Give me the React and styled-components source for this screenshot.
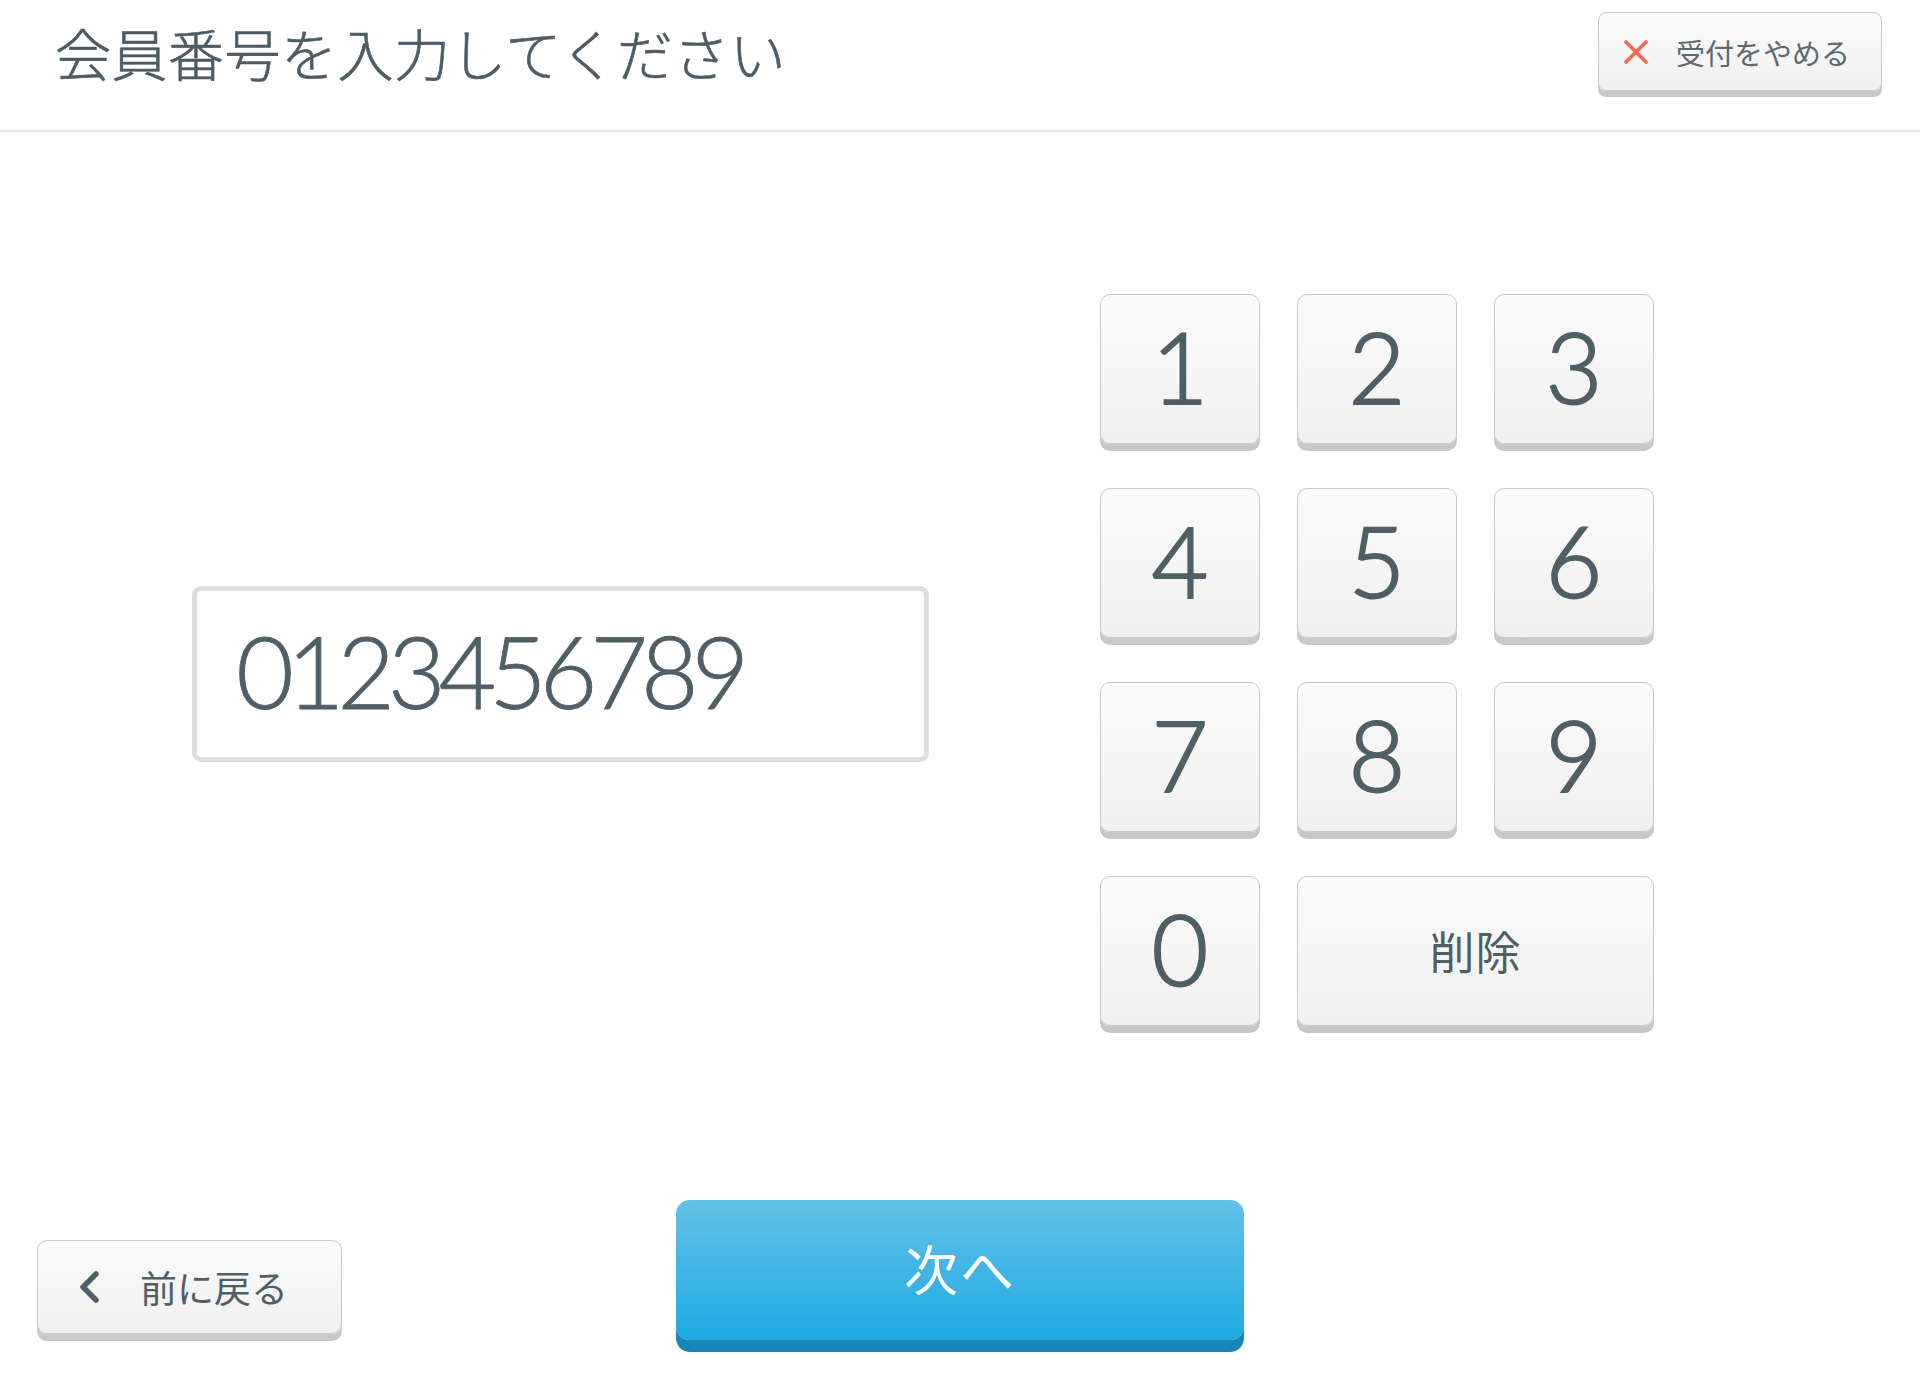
import React, { useState } from 'react';
import styled, { createGlobalStyle } from 'styled-components';

const GlobalStyle = createGlobalStyle`
  html, body {
    margin: 0;
    padding: 0;
    background: #ffffff;
  }
  body {
    font-family: "Noto Sans CJK JP", "Noto Sans", sans-serif;
    color: #4f5f66;
  }
`;

const Page = styled.div`
  width: 1920px;
  height: 1400px;
  display: flex;
  flex-direction: column;
  background: #ffffff;
`;

const Header = styled.header`
  height: 132px;
  border-bottom: 2px solid #e6e6e6;
  display: flex;
  justify-content: space-between;
  align-items: flex-start;
  padding: 12px 38px 0 55px;
  box-sizing: border-box;
`;

const Title = styled.h1`
  margin: 0;
  font-size: 56px;
  line-height: 80px;
  font-weight: 300;
  letter-spacing: 0.5px;
  color: #4d5c63;
  -webkit-text-stroke: 0.6px #4d5c63;
`;

const SoftButton = styled.button`
  display: flex;
  align-items: center;
  box-sizing: border-box;
  border: 1.5px solid #c9c9c9;
  border-radius: 10px;
  background: linear-gradient(#fbfbfb, #f0f0f0);
  box-shadow: 0 7px 0 #c8c8c8;
  color: #505f66;
  font-family: "Noto Sans CJK JP", sans-serif;
  cursor: pointer;
  padding: 0;
`;

const CancelButton = styled(SoftButton)`
  width: 284px;
  height: 79px;
  padding-left: 24px;
  gap: 27px;
  font-size: 29px;
  box-shadow: 0 6px 0 #c8c8c8;
  border-radius: 8px;
  color: #5b6a70;
`;

const Main = styled.main`
  height: 1068px;
  display: flex;
  align-items: flex-start;
  padding: 162px 0 0 192px;
  box-sizing: border-box;
  gap: 171px;
`;

const InputBox = styled.div`
  margin-top: 292px;
  width: 737px;
  height: 176px;
  box-sizing: border-box;
  border: 5px solid #dedede;
  border-radius: 9px;
  display: flex;
  align-items: center;
  padding: 0 0 8px 39px;
  font-family: Lato, "Open Sans", sans-serif;
  font-weight: 300;
  font-size: 100px;
  letter-spacing: -7.4px;
  color: #4f5f66;
  -webkit-text-stroke: 0.8px #4f5f66;
`;

const Keypad = styled.div`
  display: grid;
  grid-template-columns: repeat(3, 160px);
  grid-auto-rows: 150px;
  column-gap: 37px;
  row-gap: 44px;
`;

const Key = styled(SoftButton)`
  justify-content: center;
  grid-column: ${p => (p.$wide ? 'span 2' : 'auto')};
  font-family: ${p => (p.$wide ? '"Noto Sans CJK JP", sans-serif' : 'Lato, "Open Sans", sans-serif')};
  font-size: ${p => (p.$wide ? '45px' : '98px')};
  font-weight: ${p => (p.$wide ? 400 : 300)};
  letter-spacing: ${p => (p.$wide ? '1px' : '0')};
  padding-bottom: ${p => (p.$wide ? '2px' : '6px')};
  -webkit-text-stroke: ${p => (p.$wide ? '0' : '2px')} #4f5f66;
`;

const Footer = styled.footer`
  display: grid;
  grid-template-columns: 1fr 568px 1fr;
  align-items: end;
  padding: 0 37px;
`;

const BackButton = styled(SoftButton)`
  justify-self: start;
  width: 305px;
  height: 94px;
  padding-left: 40px;
  gap: 40px;
  font-size: 37px;
  margin-bottom: 18px;
`;

const NextButton = styled.button`
  height: 140px;
  border: none;
  border-radius: 14px;
  background: linear-gradient(#64c1e7, #1eaae3);
  box-shadow: 0 12px 0 #1a86b8;
  color: #ffffff;
  font-family: "Noto Sans CJK JP", sans-serif;
  font-size: 54px;
  font-weight: 400;
  letter-spacing: 2px;
  cursor: pointer;
  margin-bottom: 12px;
  padding-bottom: 6px;
`;

const CrossIcon = () => (
  <svg width="26" height="26" viewBox="0 0 26 26">
    <path d="M3 3 L23 23 M23 3 L3 23" stroke="#f56a4c" strokeWidth="3.8" strokeLinecap="round" />
  </svg>
);

const ChevronIcon = () => (
  <svg width="22" height="32" viewBox="0 0 22 32">
    <path d="M18 3 L5 16 L18 29" stroke="#4f5f66" strokeWidth="5.5" fill="none" strokeLinecap="round" strokeLinejoin="round" />
  </svg>
);

const keys = ['1', '2', '3', '4', '5', '6', '7', '8', '9', '0'];

export default function App() {
  const [value, setValue] = useState('0123456789');

  return (
    <Page>
      <GlobalStyle />
      <Header>
        <Title>会員番号を入力してください</Title>
        <CancelButton>
          <CrossIcon />
          受付をやめる
        </CancelButton>
      </Header>

      <Main>
        <InputBox>{value}</InputBox>
        <Keypad>
          {keys.map(k => (
            <Key key={k} onClick={() => setValue(v => v + k)}>
              {k}
            </Key>
          ))}
          <Key $wide onClick={() => setValue(v => v.slice(0, -1))}>
            削除
          </Key>
        </Keypad>
      </Main>

      <Footer>
        <BackButton>
          <ChevronIcon />
          前に戻る
        </BackButton>
        <NextButton>次へ</NextButton>
      </Footer>
    </Page>
  );
}
